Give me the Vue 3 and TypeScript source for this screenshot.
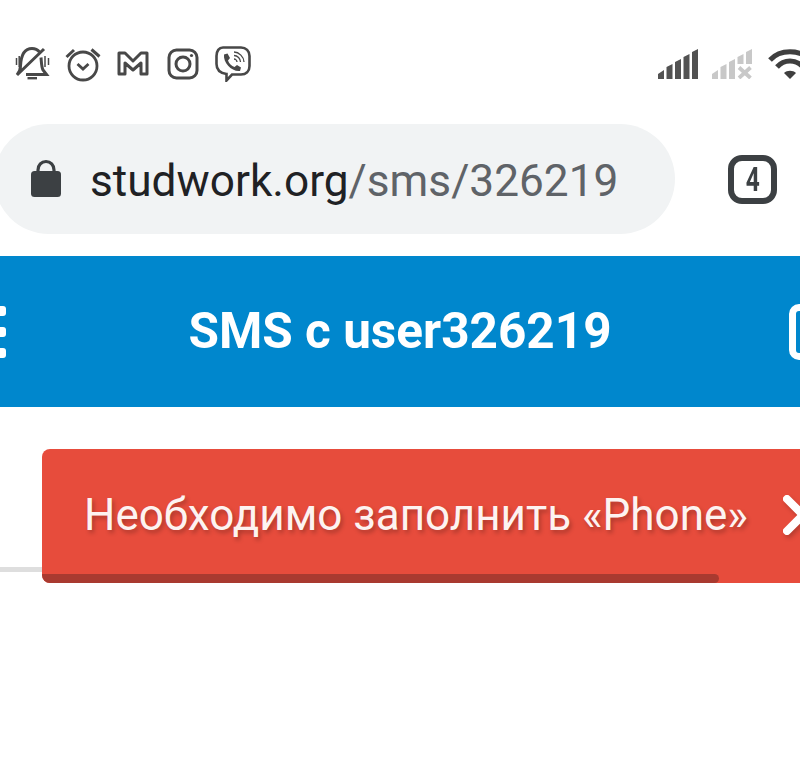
<template>
  <div class="screen">
    <!-- status bar -->
    <div class="status-bar">
      <div class="status-left">
        <svg class="status-icon" viewBox="0 0 36 36" fill="none" stroke="#484848" stroke-width="3">
          <path d="M5.5 20 C6 9 10 2.5 17 2.5 C20 2.5 22.5 3.5 24.5 6" />
          <path d="M26 11.5 C26.5 17 26.5 21 28 24 L31.5 28.5 H11" />
          <path d="M5.5 20 C5.5 23 4.5 26 2 29 L29 3" />
          <path d="M12.5 32.2 H22" stroke-width="2.4" />
          <path d="M1.5 12 V19 M4.2 10 V21" stroke-width="1.5" />
          <path d="M30 10 V21 M33.5 12 V19" stroke-width="1.5" />
        </svg>
        <svg class="status-icon" viewBox="0 0 36 36" fill="none" stroke="#484848" stroke-width="2.8">
          <circle cx="18" cy="20" r="14" />
          <path d="M12.5 18 L18 23 L23.5 18" stroke-width="2.8" />
          <path d="M1.5 11 L9 4 M26.5 3.5 L34.5 10.5" stroke-width="3" />
        </svg>
        <svg class="status-icon" viewBox="0 0 36 36" fill="none" stroke="#484848" stroke-width="3" stroke-linejoin="round">
          <path d="M4 7 H10 L18 15 L26 7 H32 V28 H26 V17 L18 24 L10 17 V28 H4 Z" />
        </svg>
        <svg class="status-icon" viewBox="0 0 36 36" fill="none" stroke="#484848" stroke-width="3">
          <rect x="4" y="4" width="28" height="28" rx="7.5" />
          <circle cx="18" cy="18" r="7" />
          <circle cx="26.5" cy="9.5" r="1.6" fill="#484848" stroke="none" />
        </svg>
        <svg class="status-icon" viewBox="0 0 36 36" fill="none" stroke="#484848" stroke-width="2.6">
          <path d="M8 1.5 H26 C31 1.5 34.5 5 34.5 10 V20 C34.5 25.5 31 28.5 26 28.5 H17 L11.5 34.5 V28 C4.5 27 1.5 24 1.5 18 V10 C1.5 5 4 1.5 8 1.5 Z" />
          <path d="M9 8.5 L12.5 7.5 L15 12 L13 14.5 C14 17.5 16.5 20 19.5 21 L22 19 L26 21.5 L25 25 C17 26 8 17 9 8.5 Z" fill="#484848" stroke="none" />
          <path d="M19 6 C24 6 29 11 29 16 M19 9.5 C22.5 9.5 25.5 12.5 25.5 16 M19 13 C20.5 13 22 14.5 22 16" stroke-width="1.3" />
        </svg>
      </div>
      <div class="status-right">
        <svg class="signal" viewBox="0 0 40 30" fill="#525252">
          <path d="M0 30 V25 L6 21 V30 Z M8.5 30 V18 L14.5 15 V30 Z M17 30 V13 L23 10 V30 Z M25.5 30 V8 L31.5 5 V30 Z M34 30 V3 L40 0 V30 Z" />
        </svg>
        <svg class="signal" viewBox="0 0 40 30" fill="#c8c8c8">
          <path d="M0 30 V25 L6 21 V30 Z M8.5 30 V18 L14.5 15 V30 Z M17 30 V13 L23 10 V30 Z M25.5 15 V8 L31.5 5 V15 Z M34 15 V3 L40 0 V15 Z" />
          <path d="M27 18.5 L38.5 29 M38.5 18.5 L27 29" stroke="#c8c8c8" stroke-width="3.8" fill="none" />
        </svg>
        <svg class="wifi" viewBox="0 0 44 30" fill="none" stroke="#3f3f3f" stroke-width="5">
          <path d="M2 11 C12 0 32 0 42 11" />
          <path d="M9 18 C16 10 28 10 35 18" />
          <path d="M22 30 L16 24 C19 21 25 21 28 24 Z" fill="#3f3f3f" stroke="none" />
        </svg>
      </div>
    </div>

    <!-- address bar -->
    <div class="address-row">
      <div class="address-pill">
        <svg class="lock" viewBox="0 0 30 38">
          <path d="M7 16 V11 C7 6 10.5 2.5 15 2.5 C19.5 2.5 23 6 23 11 V16" fill="none" stroke="#3c4043" stroke-width="3.2" />
          <rect x="0" y="12" width="30" height="26" rx="3.5" fill="#3c4043" />
        </svg>
        <span class="url"><span class="host">studwork.org</span>/sms/326219</span>
      </div>
      <div class="tabs-count"><span>4</span></div>
    </div>

    <!-- page header -->
    <div class="page-header">
      <div class="menu-btn">
        <i></i><i></i><i></i>
      </div>
      <div class="page-title">SMS с user326219</div>
      <div class="header-box"></div>
    </div>

    <div class="divider"></div>

    <!-- toast -->
    <div class="toast">
      <span class="toast-text">Необходимо заполнить «Phone»</span>
      <svg class="toast-close" viewBox="0 0 40 40" fill="none" stroke="#fff" stroke-width="8" stroke-linecap="round">
        <path d="M4 4 L36 36 M36 4 L4 36" />
      </svg>
      <div class="toast-progress"></div>
    </div>
  </div>
</template>

<script setup lang="ts">
</script>

<style>
html,
body {
  margin: 0;
  background: #fff;
  overflow: hidden;
}
</style>

<style scoped>
.screen {
  position: relative;
  width: 800px;
  height: 767px;
  overflow: hidden;
  background: #fff;
  font-family: Roboto, "Liberation Sans", sans-serif;
}

.status-bar {
  display: flex;
  justify-content: space-between;
  align-items: flex-start;
  height: 124px;
  box-sizing: border-box;
  padding: 46px 0 0 15px;
}

.status-left {
  display: flex;
  gap: 14px;
}

.status-icon {
  width: 36px;
  height: 36px;
  display: block;
}

.status-right {
  display: flex;
  gap: 14px;
  margin-top: 3px;
  margin-right: -12px;
}

.signal {
  width: 40px;
  height: 30px;
  display: block;
}

.wifi {
  width: 44px;
  height: 30px;
  display: block;
  margin-left: 2px;
}

.address-row {
  display: flex;
  align-items: center;
  height: 110px;
  margin-bottom: 22px;
}

.address-pill {
  display: flex;
  align-items: center;
  width: 681px;
  height: 110px;
  margin-left: -6px;
  padding-left: 37px;
  box-sizing: border-box;
  background: #f1f3f4;
  border-radius: 55px;
}

.lock {
  width: 30px;
  height: 38px;
  flex: none;
  margin-bottom: 2px;
}

.url {
  margin-left: 29px;
  padding-top: 4px;
  font-size: 44.2px;
  color: #5f6368;
  white-space: nowrap;
}

.host {
  color: #202124;
}

.tabs-count {
  display: flex;
  align-items: center;
  justify-content: center;
  width: 49px;
  height: 49px;
  margin-left: 53px;
  box-sizing: border-box;
  border: 6px solid #3c4043;
  border-radius: 14px;
  color: #3c4043;
  font-size: 34px;
  line-height: 1;
  font-weight: 700;
}

.tabs-count span {
  display: block;
  transform: scaleX(0.72);
}

.page-header {
  display: grid;
  grid-template-columns: 1fr auto 1fr;
  align-items: center;
  height: 151px;
  background: #0087cd;
}

.menu-btn {
  display: flex;
  flex-direction: column;
  gap: 11px;
  width: 16px;
  margin-left: -10px;
}

.menu-btn i {
  display: block;
  height: 10px;
  background: #fff;
  border-radius: 3px;
}

.page-title {
  color: #fff;
  font-size: 49.5px;
  font-weight: 700;
  white-space: nowrap;
  padding-bottom: 2px;
}

.header-box {
  justify-self: end;
  width: 40px;
  height: 56px;
  margin-right: -29px;
  box-sizing: border-box;
  border: 7px solid #fff;
  border-radius: 10px;
}

.divider {
  height: 5px;
  margin-top: 160px;
  background: #dedede;
}

.toast {
  position: absolute;
  top: 449px;
  left: 42px;
  right: 0;
  height: 134px;
  display: flex;
  align-items: center;
  padding-left: 42px;
  padding-bottom: 2px;
  box-sizing: border-box;
  background: #e74c3c;
  border-radius: 8px 0 0 8px;
  overflow: hidden;
}

.toast-text {
  color: #fdf3f1;
  font-size: 44px;
  white-space: nowrap;
  text-shadow: 2px 3px 4px rgba(0, 0, 0, 0.25);
}

.toast-close {
  width: 40px;
  height: 40px;
  margin-left: 35px;
  flex: none;
  filter: drop-shadow(2px 3px 2px rgba(0, 0, 0, 0.2));
}

.toast-progress {
  position: absolute;
  left: 0;
  bottom: 0;
  width: 677px;
  height: 9px;
  background: #a93a30;
  border-radius: 0 5px 5px 0;
}
</style>
